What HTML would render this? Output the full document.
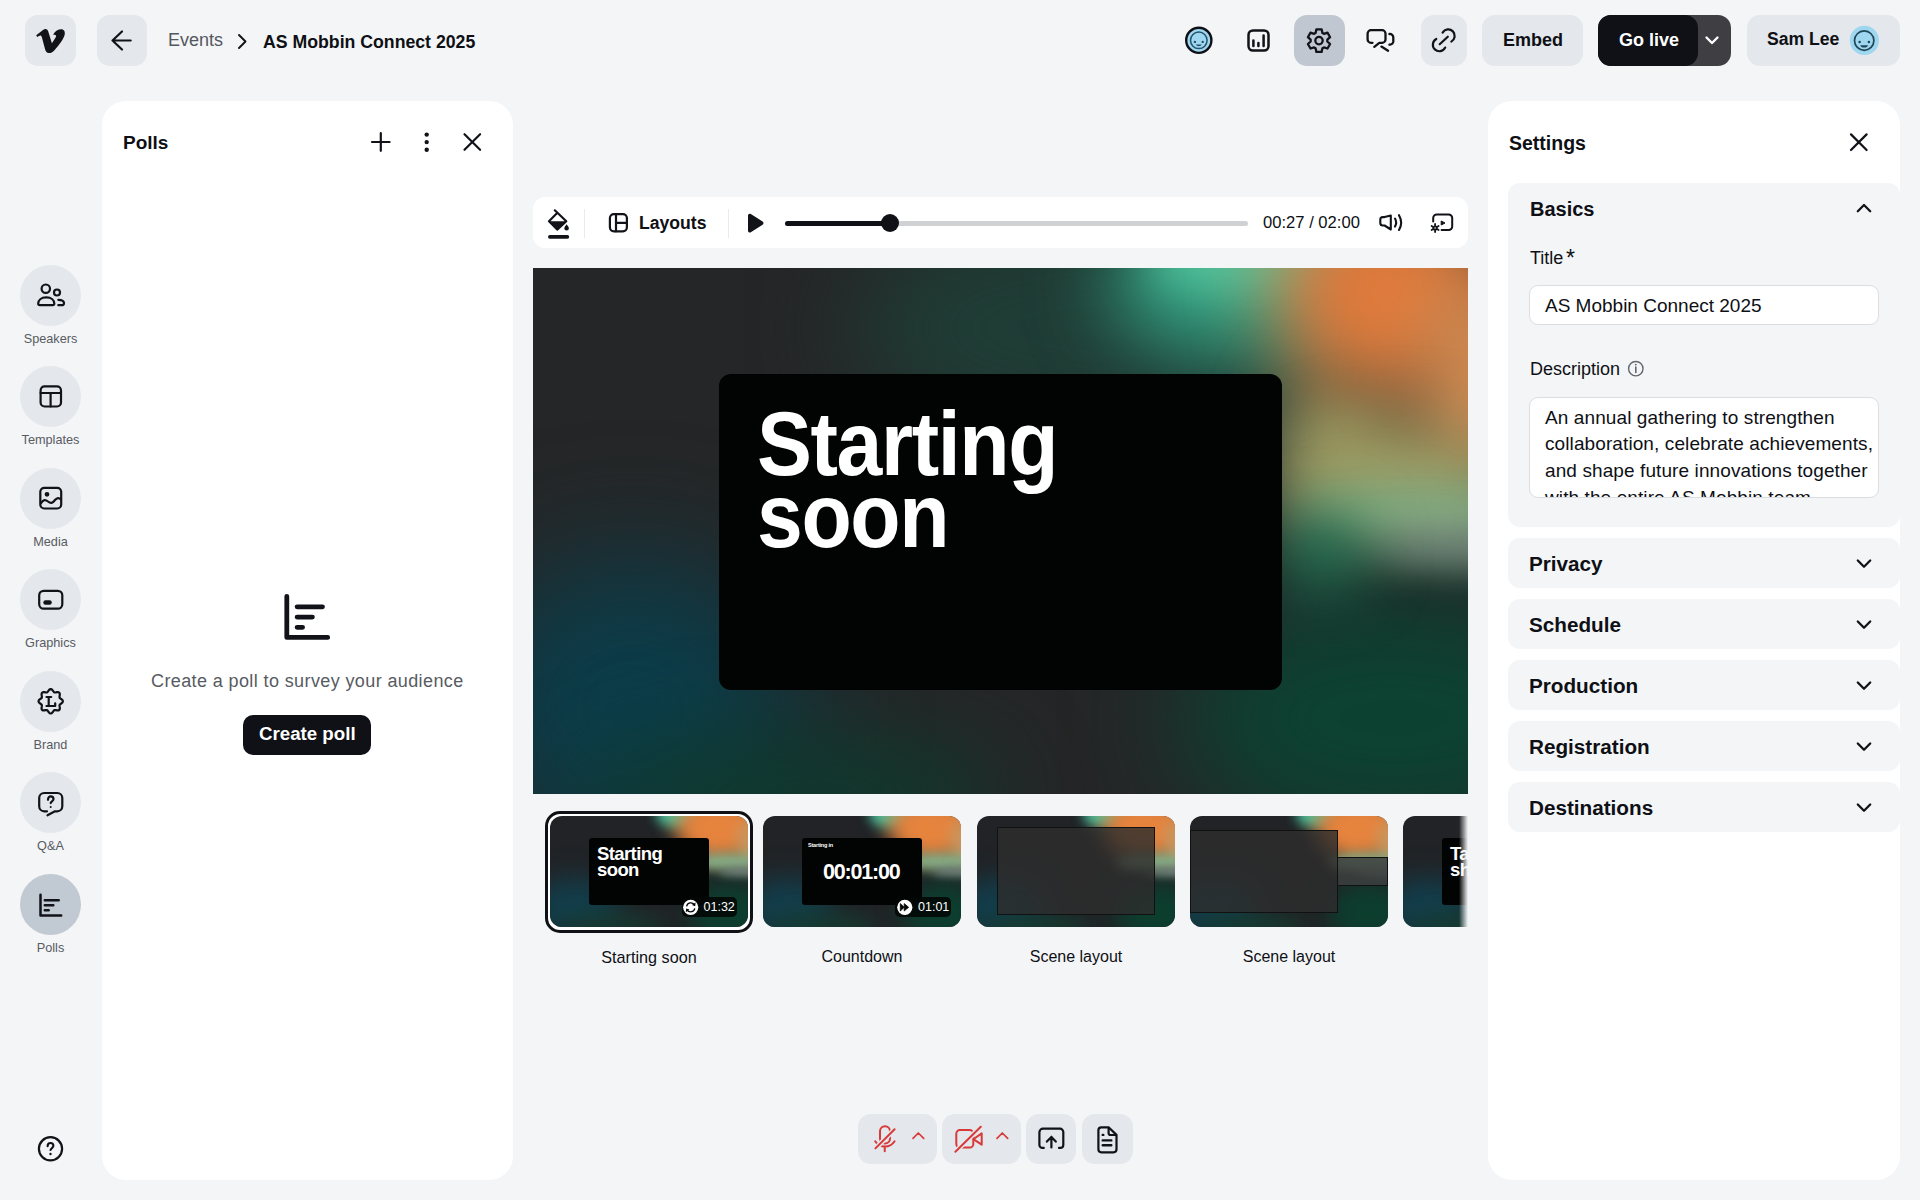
<!DOCTYPE html>
<html><head><meta charset="utf-8">
<style>
*{box-sizing:border-box;margin:0;padding:0}
html,body{width:1920px;height:1200px;overflow:hidden;background:#f4f5f7;font-family:"Liberation Sans",sans-serif;color:#0e1015}
.a{position:absolute}
.t{position:absolute;line-height:1;white-space:nowrap}
.btn{position:absolute;background:#e4e7eb;border-radius:13px}
svg{position:absolute;overflow:visible}
.ic{fill:none;stroke:#111318;stroke-width:2.2;stroke-linecap:round;stroke-linejoin:round}
.circ{position:absolute;left:20px;width:61px;height:61px;border-radius:50%;background:#e4e7eb}
.lbl{position:absolute;left:0;width:101px;text-align:center;font-size:12.7px;color:#575b62;line-height:1}
.panel{position:absolute;background:#fff;border-radius:24px}
.sec{position:absolute;left:20px;width:392px;height:50px;background:#f4f5f7;border-radius:12px}
.sec .t{left:21px;font-size:20.7px;font-weight:700;top:16px}
.chev{position:absolute;left:349px;top:17px}
.blob{position:absolute;border-radius:50%}
.thumb{position:absolute;width:198px;height:111px;border-radius:12px;overflow:hidden;background:#212326}
</style></head><body>

<!-- TOP BAR -->
<div class="btn" style="left:25px;top:15px;width:51px;height:51px"></div>
<div class="btn" style="left:97px;top:15px;width:50px;height:51px"></div>
<div class="t" style="left:168px;top:31px;font-size:18px;color:#53575e">Events</div>
<div class="t" style="left:263px;top:33.8px;font-size:17.7px;font-weight:700;color:#0e1015">AS Mobbin Connect 2025</div>

<div class="btn" style="left:1294px;top:15px;width:51px;height:51px;background:#c0c7d1"></div>
<div class="btn" style="left:1421px;top:15px;width:46px;height:51px"></div>
<div class="btn" style="left:1482px;top:15px;width:101px;height:51px"></div>
<div class="t" style="left:1503px;top:31px;font-size:18px;font-weight:700">Embed</div>
<div class="a" style="left:1598px;top:15px;width:133px;height:51px;border-radius:13px;background:#3f3f43"></div>
<div class="a" style="left:1598px;top:15px;width:100px;height:51px;border-radius:13px;background:#0f1116"></div>
<div class="t" style="left:1619px;top:31px;font-size:18px;font-weight:700;color:#fff">Go live</div>
<div class="btn" style="left:1747px;top:15px;width:153px;height:51px"></div>
<div class="t" style="left:1767px;top:31px;font-size:17.6px;font-weight:700">Sam Lee</div>

<!-- SIDEBAR -->
<div class="circ" style="top:264.5px"></div>
<div class="lbl" style="top:332.5px">Speakers</div>
<div class="circ" style="top:366px"></div>
<div class="lbl" style="top:434px">Templates</div>
<div class="circ" style="top:467.5px"></div>
<div class="lbl" style="top:535.5px">Media</div>
<div class="circ" style="top:569px"></div>
<div class="lbl" style="top:637px">Graphics</div>
<div class="circ" style="top:670.5px"></div>
<div class="lbl" style="top:738.5px">Brand</div>
<div class="circ" style="top:772px"></div>
<div class="lbl" style="top:840px">Q&amp;A</div>
<div class="circ" style="top:873.5px;background:#c1c9d2"></div>
<div class="lbl" style="top:941.5px">Polls</div>

<!-- POLLS PANEL -->
<div class="panel" style="left:102px;top:101px;width:411px;height:1079px"></div>
<div class="t" style="left:123px;top:133px;font-size:19px;font-weight:700">Polls</div>
<div class="t" style="left:151px;top:672px;font-size:18px;letter-spacing:0.39px;color:#575b62">Create a poll to survey your audience</div>
<div class="a" style="left:243px;top:715px;width:128px;height:40px;border-radius:10px;background:#0f1116"></div>
<div class="t" style="left:259px;top:725px;font-size:18.7px;font-weight:700;color:#fff">Create poll</div>

<!-- CENTER TOOLBAR -->
<div class="a" style="left:533px;top:197px;width:935px;height:51px;border-radius:12px;background:#fff"></div>
<div class="a" style="left:584px;top:209px;width:1px;height:29px;background:#e8eaed"></div>
<div class="a" style="left:728px;top:209px;width:1px;height:29px;background:#e8eaed"></div>
<div class="t" style="left:639px;top:215px;font-size:17.6px;font-weight:700">Layouts</div>
<div class="a" style="left:785px;top:220.5px;width:463px;height:5px;border-radius:3px;background:#d0d1d3"></div>
<div class="a" style="left:785px;top:220.5px;width:105px;height:5px;border-radius:3px;background:#0f1116"></div>
<div class="a" style="left:880.5px;top:214px;width:18px;height:18px;border-radius:50%;background:#0f1116"></div>
<div class="t" style="left:1263px;top:214.5px;font-size:16.6px">00:27 / 02:00</div>

<!-- STAGE -->
<div class="a" style="left:533px;top:268px;width:935px;height:526px;overflow:hidden;background:#252627">
  <div class="blob" style="left:320px;top:-60px;width:560px;height:240px;background:#1f3d36;filter:blur(50px)"></div><div class="blob" style="left:575px;top:-60px;width:280px;height:150px;background:#35a283;filter:blur(40px)"></div><div class="blob" style="left:615px;top:-40px;width:200px;height:60px;background:#55c8a0;filter:blur(22px)"></div><div class="blob" style="left:745px;top:105px;width:110px;height:170px;background:#8f9460;filter:blur(35px)"></div><div class="blob" style="left:740px;top:-80px;width:230px;height:210px;background:#e07a3c;filter:blur(40px)"></div><div class="blob" style="left:885px;top:0px;width:120px;height:220px;background:#d38c52;filter:blur(35px)"></div><div class="blob" style="left:760px;top:160px;width:220px;height:90px;background:#a9a466;filter:blur(35px)"></div><div class="blob" style="left:765px;top:216px;width:260px;height:64px;background:#8cba8c;filter:blur(25px)"></div><div class="blob" style="left:835px;top:265px;width:200px;height:34px;background:#8a9690;filter:blur(20px)"></div><div class="blob" style="left:645px;top:325px;width:430px;height:250px;background:#0c4232;filter:blur(55px)"></div><div class="blob" style="left:745px;top:245px;width:90px;height:80px;background:#1c6a50;filter:blur(30px)"></div><div class="blob" style="left:-65px;top:290px;width:330px;height:300px;background:#0b3d4a;filter:blur(60px)"></div><div class="blob" style="left:50px;top:470px;width:420px;height:110px;background:#0e3a2e;filter:blur(45px)"></div>
  <div class="a" style="left:186px;top:106px;width:563px;height:316px;border-radius:12px;background:#020303"></div>
  <div class="t" style="left:224px;top:140px;font-size:90px;font-weight:700;color:#fff;letter-spacing:-1.5px;line-height:72.4px;transform:scaleX(0.915);transform-origin:0 0">Starting<br>soon</div>
</div>

<!-- THUMBNAILS -->
<div class="a" style="left:545px;top:811px;width:208px;height:122px;border-radius:15px;border:3px solid #0f1116;background:#fff"></div>
<div class="a thumb" style="left:550px;top:816px"><div class="blob" style="left:106px;top:-14px;width:44px;height:26px;background:#45c09e;filter:blur(6px)"></div><div class="blob" style="left:125px;top:-21px;width:90px;height:66px;background:#e6843e;filter:blur(10px)"></div><div class="blob" style="left:187px;top:3px;width:26px;height:44px;background:#c9965e;filter:blur(7px)"></div><div class="blob" style="left:138px;top:38px;width:80px;height:16px;background:#8cba90;filter:blur(6px)"></div><div class="blob" style="left:169px;top:52px;width:50px;height:9px;background:#86908c;filter:blur(4px)"></div><div class="blob" style="left:138px;top:66px;width:84px;height:62px;background:#0c3e2e;filter:blur(12px)"></div><div class="blob" style="left:-20px;top:62px;width:90px;height:62px;background:#123e4c;filter:blur(14px)"></div><div class="blob" style="left:5px;top:98px;width:110px;height:24px;background:#163a30;filter:blur(10px)"></div><div class="a" style="left:39px;top:22px;width:120px;height:67px;border-radius:3px;background:#020303"></div>
  <div class="t" style="left:47px;top:30px;font-size:18.5px;font-weight:700;color:#fff;letter-spacing:-0.6px;line-height:16.3px">Starting<br>soon</div>
  <div class="a" style="left:132px;top:81.3px;width:55px;height:19.3px;border-radius:5px;background:rgba(2,8,6,.9)"></div>
  <svg style="left:0;top:0" width="198" height="111"><circle cx="140.7" cy="91.3" r="7.6" fill="#fff"/><path d="M136.6 90.3 A4.3 4.3 0 0 1 144.3 88.6 M144.8 92.3 A4.3 4.3 0 0 1 137.1 94" fill="none" stroke="#050807" stroke-width="1.3"/><path d="M145.6 86.4 L145.2 90.2 L141.9 89 Z M135.8 96.2 L136.2 92.4 L139.5 93.6 Z" fill="#050807"/></svg>
  <div class="t" style="left:153.5px;top:85px;font-size:12.5px;color:#fff">01:32</div>
</div>
<div class="a thumb" style="left:763px;top:816px"><div class="blob" style="left:106px;top:-14px;width:44px;height:26px;background:#45c09e;filter:blur(6px)"></div><div class="blob" style="left:125px;top:-21px;width:90px;height:66px;background:#e6843e;filter:blur(10px)"></div><div class="blob" style="left:187px;top:3px;width:26px;height:44px;background:#c9965e;filter:blur(7px)"></div><div class="blob" style="left:138px;top:38px;width:80px;height:16px;background:#8cba90;filter:blur(6px)"></div><div class="blob" style="left:169px;top:52px;width:50px;height:9px;background:#86908c;filter:blur(4px)"></div><div class="blob" style="left:138px;top:66px;width:84px;height:62px;background:#0c3e2e;filter:blur(12px)"></div><div class="blob" style="left:-20px;top:62px;width:90px;height:62px;background:#123e4c;filter:blur(14px)"></div><div class="blob" style="left:5px;top:98px;width:110px;height:24px;background:#163a30;filter:blur(10px)"></div><div class="a" style="left:39px;top:22px;width:120px;height:67px;border-radius:3px;background:#020303"></div>
  <div class="t" style="left:45px;top:27px;font-size:5.5px;font-weight:700;color:#fff;letter-spacing:-0.2px">Starting in</div>
  <div class="t" style="left:60px;top:46px;font-size:21.5px;font-weight:700;color:#fff;letter-spacing:-1.2px">00:01:00</div>
  <div class="a" style="left:132.3px;top:81.3px;width:55.4px;height:19.3px;border-radius:5px;background:rgba(2,8,6,.9)"></div>
  <svg style="left:0;top:0" width="198" height="111"><circle cx="141.8" cy="91.3" r="7.6" fill="#fff"/><path d="M137.3 87.6 L141.2 91.3 L137.3 95 Z M141.2 87.6 L145.6 91.3 L141.2 95 Z" fill="#050807" stroke="#050807" stroke-width="0.8" stroke-linejoin="round"/></svg>
  <div class="t" style="left:155px;top:85px;font-size:12.5px;color:#fff">01:01</div>
</div>
<div class="a thumb" style="left:977px;top:816px"><div class="blob" style="left:106px;top:-14px;width:44px;height:26px;background:#45c09e;filter:blur(6px)"></div><div class="blob" style="left:125px;top:-21px;width:90px;height:66px;background:#e6843e;filter:blur(10px)"></div><div class="blob" style="left:187px;top:3px;width:26px;height:44px;background:#c9965e;filter:blur(7px)"></div><div class="blob" style="left:138px;top:38px;width:80px;height:16px;background:#8cba90;filter:blur(6px)"></div><div class="blob" style="left:169px;top:52px;width:50px;height:9px;background:#86908c;filter:blur(4px)"></div><div class="blob" style="left:138px;top:66px;width:84px;height:62px;background:#0c3e2e;filter:blur(12px)"></div><div class="blob" style="left:-20px;top:62px;width:90px;height:62px;background:#123e4c;filter:blur(14px)"></div><div class="blob" style="left:5px;top:98px;width:110px;height:24px;background:#163a30;filter:blur(10px)"></div><div class="a" style="left:20px;top:11px;width:158px;height:88px;background:rgba(45,45,45,.82);border:1px solid #111;"></div>
</div>
<div class="a thumb" style="left:1190px;top:816px"><div class="blob" style="left:106px;top:-14px;width:44px;height:26px;background:#45c09e;filter:blur(6px)"></div><div class="blob" style="left:125px;top:-21px;width:90px;height:66px;background:#e6843e;filter:blur(10px)"></div><div class="blob" style="left:187px;top:3px;width:26px;height:44px;background:#c9965e;filter:blur(7px)"></div><div class="blob" style="left:138px;top:38px;width:80px;height:16px;background:#8cba90;filter:blur(6px)"></div><div class="blob" style="left:169px;top:52px;width:50px;height:9px;background:#86908c;filter:blur(4px)"></div><div class="blob" style="left:138px;top:66px;width:84px;height:62px;background:#0c3e2e;filter:blur(12px)"></div><div class="blob" style="left:-20px;top:62px;width:90px;height:62px;background:#123e4c;filter:blur(14px)"></div><div class="blob" style="left:5px;top:98px;width:110px;height:24px;background:#163a30;filter:blur(10px)"></div><div class="a" style="left:0;top:14px;width:148px;height:83px;background:rgba(45,45,45,.82);border:1px solid #111;"></div>
  <div class="a" style="left:147px;top:41px;width:51px;height:29px;background:rgba(60,62,62,.85);border:1px solid #111;"></div>
</div>
<div class="a" style="left:1403px;top:816px;width:65px;height:111px;overflow:hidden">
  <div class="a thumb" style="left:0;top:0"><div class="blob" style="left:106px;top:-14px;width:44px;height:26px;background:#45c09e;filter:blur(6px)"></div><div class="blob" style="left:125px;top:-21px;width:90px;height:66px;background:#e6843e;filter:blur(10px)"></div><div class="blob" style="left:187px;top:3px;width:26px;height:44px;background:#c9965e;filter:blur(7px)"></div><div class="blob" style="left:138px;top:38px;width:80px;height:16px;background:#8cba90;filter:blur(6px)"></div><div class="blob" style="left:169px;top:52px;width:50px;height:9px;background:#86908c;filter:blur(4px)"></div><div class="blob" style="left:138px;top:66px;width:84px;height:62px;background:#0c3e2e;filter:blur(12px)"></div><div class="blob" style="left:-20px;top:62px;width:90px;height:62px;background:#123e4c;filter:blur(14px)"></div><div class="blob" style="left:5px;top:98px;width:110px;height:24px;background:#163a30;filter:blur(10px)"></div>  <div class="a" style="left:39px;top:22px;width:120px;height:67px;border-radius:3px;background:#020303"></div>
    <div class="t" style="left:47px;top:30px;font-size:18.5px;font-weight:700;color:#fff;letter-spacing:-0.6px;line-height:16.3px">Take a<br>short break</div>
  </div>
  <div class="a" style="left:56px;top:0;width:9px;height:111px;background:linear-gradient(90deg,rgba(244,245,247,0),rgba(244,245,247,1))"></div>
</div>
<div class="t" style="left:550px;top:948.5px;width:198px;text-align:center;font-size:16.2px">Starting soon</div>
<div class="t" style="left:763px;top:948.5px;width:198px;text-align:center;font-size:16px">Countdown</div>
<div class="t" style="left:977px;top:948.5px;width:198px;text-align:center;font-size:16px">Scene layout</div>
<div class="t" style="left:1190px;top:948.5px;width:198px;text-align:center;font-size:16px">Scene layout</div>

<!-- BOTTOM CONTROLS -->
<div class="btn" style="left:858px;top:1114px;width:79px;height:50px"></div>
<div class="btn" style="left:942px;top:1114px;width:79px;height:50px"></div>
<div class="btn" style="left:1026px;top:1114px;width:50px;height:50px"></div>
<div class="btn" style="left:1082px;top:1114px;width:51px;height:50px"></div>

<!-- SETTINGS PANEL -->
<div class="panel" style="left:1488px;top:101px;width:412px;height:1079px;overflow:hidden">
  <div class="t" style="left:21px;top:33px;font-size:19.5px;font-weight:700">Settings</div>
  <div class="a" style="left:20px;top:82px;width:392px;height:344px;background:#f4f5f7;border-radius:12px"></div>
  <div class="t" style="left:42px;top:98px;font-size:20px;font-weight:700">Basics</div>
  <div class="t" style="left:42px;top:148px;font-size:18px">Title<span style="position:absolute;left:36px;top:-2.5px;font-size:23px;line-height:1">*</span></div>
  <div class="a" style="left:41px;top:184px;width:350px;height:40px;background:#fff;border:1px solid #dadde2;border-radius:9px"></div>
  <div class="t" style="left:57px;top:195px;font-size:19px">AS Mobbin Connect 2025</div>
  <div class="t" style="left:42px;top:259px;font-size:18px">Description</div>
  <div class="a" style="left:41px;top:296px;width:350px;height:101px;background:#fff;border:1px solid #dadde2;border-radius:9px;overflow:hidden">
    <div style="position:absolute;left:15px;top:6.5px;width:340px;font-size:19px;line-height:26.7px;letter-spacing:0.1px;white-space:nowrap">An annual gathering to strengthen<br>collaboration, celebrate achievements,<br>and shape future innovations together<br>with the entire AS Mobbin team.</div>
  </div>
  <div class="sec" style="top:437px"><div class="t">Privacy</div></div>
  <div class="sec" style="top:498px"><div class="t">Schedule</div></div>
  <div class="sec" style="top:559px"><div class="t">Production</div></div>
  <div class="sec" style="top:620px"><div class="t">Registration</div></div>
  <div class="sec" style="top:681px"><div class="t">Destinations</div></div>
</div>


<svg class="a" style="left:0;top:0" width="1920" height="1200" viewBox="0 0 1920 1200">
<!-- vimeo -->
<path fill="#111318" d="M36.2 35.3 L43 30 C45.6 28.2 47.8 29.3 48.4 32 L51.9 43.2 L55.6 37.6 C56.6 36 56.4 34.5 53.1 34.7 C55 31 58.4 29.2 61.2 29.2 C64 29.2 65.3 31.6 64.7 34.6 C64 38.6 59.5 44.8 54.5 50.2 C52.5 52.5 50.6 53.2 48.8 53.1 C46.9 53 45.7 51.6 45 49 L41.8 37 C41.4 35.3 40.3 35 38.9 35.9 L37.2 36.9 Z"/>
<!-- back arrow -->
<path class="ic" style="stroke-width:2.2" d="M130.7 40.5 H112.5 M122 31.5 L112.5 40.5 L122 49.5"/>
<!-- breadcrumb chevron -->
<path class="ic" style="stroke-width:1.9" d="M239 35 L245.5 41.5 L239 48"/>
<!-- smiley -->
<circle cx="1198.8" cy="40.3" r="12.6" fill="#9fd6f0" stroke="#0e1015" stroke-width="2.4"/>
<circle cx="1198.8" cy="40.3" r="8.3" fill="none" stroke="#24536b" stroke-width="1.5"/>
<circle cx="1194.9" cy="41.9" r="1.2" fill="#24536b"/><circle cx="1202.7" cy="41.9" r="1.2" fill="#24536b"/>
<path d="M1195.6 44.4 H1201.9 Q1201 46.2 1198.8 46.2 Q1196.6 46.2 1195.6 44.4Z" fill="#24536b"/>
<!-- chart -->
<rect class="ic" style="stroke-width:2.5" x="1248.5" y="30.4" width="20" height="20.2" rx="4.5"/>
<path class="ic" style="stroke-width:2.5" d="M1253.4 40.5 V46 M1258.4 43 V46 M1263.6 35.5 V46"/>
<!-- gear -->
<path class="ic" style="stroke-width:2.3" d="M1315.58 32.93 L1316.39 29.30 L1321.61 29.30 L1322.42 32.93 L1323.94 33.80 L1327.48 32.69 L1330.09 37.21 L1327.35 39.72 L1327.35 41.48 L1330.09 43.99 L1327.48 48.51 L1323.94 47.40 L1322.42 48.27 L1321.61 51.90 L1316.39 51.90 L1315.58 48.27 L1314.06 47.40 L1310.52 48.51 L1307.91 43.99 L1310.65 41.48 L1310.65 39.72 L1307.91 37.21 L1310.52 32.69 L1314.06 33.80Z"/>
<circle class="ic" style="stroke-width:2.3" cx="1319" cy="40.6" r="3.7"/>
<!-- chat -->
<path class="ic" style="stroke-width:2.3" d="M1372.5 42.8 H1371 A3.4 3.4 0 0 1 1367.6 39.4 V33.6 A3.4 3.4 0 0 1 1371 30.2 H1382.1 A3.4 3.4 0 0 1 1385.5 33.6 V39.4 A3.4 3.4 0 0 1 1382.1 42.8 H1379.3 L1374.3 46.8"/>
<path class="ic" style="stroke-width:2.3" d="M1389.4 34 A3.4 3.4 0 0 1 1393.3 37.4 V40.4 A3.4 3.4 0 0 1 1389.4 44.6 M1381.4 46.6 L1388.1 50.7"/>
<!-- link -->
<path class="ic" style="stroke-width:2.2" d="M1442.6 32.6 A6.5 6.5 0 1 1 1451.3 41.6 M1445.2 47.6 A6.5 6.5 0 1 1 1436.3 39 M1439.7 44.2 L1447.8 36.7"/>
<!-- go live chevron -->
<path fill="none" stroke="#fff" stroke-width="2.4" stroke-linecap="round" stroke-linejoin="round" d="M1706.5 37.5 L1712 43 L1717.5 37.5"/>
<!-- sam avatar -->
<circle cx="1864.4" cy="40.4" r="14.6" fill="#9fd6f0"/>
<circle cx="1864.2" cy="40.6" r="9.7" fill="none" stroke="#1f4756" stroke-width="1.7"/>
<circle cx="1859.6" cy="42.1" r="1.25" fill="#1f4756"/><circle cx="1868.9" cy="42.1" r="1.25" fill="#1f4756"/>
<path d="M1860.3 45.2 H1868 Q1867.5 47.5 1864.15 47.5 Q1860.8 47.5 1860.3 45.2Z" fill="#1f4756"/>

<!-- sidebar: speakers -->
<g class="ic">
<circle cx="45.8" cy="288.7" r="4.2"/>
<circle cx="57" cy="292.5" r="3"/>
<path d="M46.3 297.3 C51.5 297.3 54.3 300.3 54.3 303.6 C54.3 304.6 53.6 305.2 52.6 305.2 H39.9 C38.9 305.2 38.2 304.6 38.2 303.6 C38.2 300.3 41 297.3 46.3 297.3Z"/>
<path d="M58.3 299.8 C61.8 299.8 64 301.3 64 303.2 C64 304.6 63 305.2 61.6 305.2 H58.3"/>
<!-- templates -->
<rect x="40.6" y="386.4" width="20.4" height="20.1" rx="4"/>
<path d="M40.6 393 H61 M50.6 393 V406.5"/>
<!-- media -->
<rect x="40.3" y="487.8" width="20.9" height="20.7" rx="4"/>
<path d="M41 503 C43.5 499.5 45.5 499.5 48 501.5 C50.5 503.5 52.5 503.5 55 500 C57 497.5 59 497.5 61 499.5"/>
<circle cx="47" cy="494.3" r="1.3" fill="#111318"/>
<!-- graphics -->
<rect x="39.2" y="590.8" width="23.1" height="17.9" rx="4.5"/>
<rect x="43.3" y="600.2" width="8.5" height="4.6" rx="2.3" fill="#111318" stroke="none"/>
<!-- brand -->
<path d="M62.9 701.3 L62.6 702.3 L61.7 703.2 L60.6 704.0 L59.8 704.6 L59.5 705.4 L59.6 706.4 L59.8 707.7 L59.8 708.9 L59.3 709.9 L58.3 710.4 L57.1 710.4 L55.8 710.2 L54.8 710.1 L54.0 710.4 L53.4 711.2 L52.6 712.3 L51.7 713.2 L50.7 713.5 L49.7 713.2 L48.8 712.3 L48.0 711.2 L47.4 710.4 L46.6 710.1 L45.6 710.2 L44.3 710.4 L43.1 710.4 L42.1 709.9 L41.6 708.9 L41.6 707.7 L41.8 706.4 L41.9 705.4 L41.6 704.6 L40.8 704.0 L39.7 703.2 L38.8 702.3 L38.5 701.3 L38.8 700.3 L39.7 699.4 L40.8 698.6 L41.6 698.0 L41.9 697.2 L41.8 696.2 L41.6 694.9 L41.6 693.7 L42.1 692.7 L43.1 692.2 L44.3 692.2 L45.6 692.4 L46.6 692.5 L47.4 692.2 L48.0 691.4 L48.8 690.3 L49.7 689.4 L50.7 689.1 L51.7 689.4 L52.6 690.3 L53.4 691.4 L54.0 692.2 L54.8 692.5 L55.8 692.4 L57.1 692.2 L58.3 692.2 L59.3 692.7 L59.8 693.7 L59.8 694.9 L59.6 696.2 L59.5 697.2 L59.8 698.0 L60.6 698.6 L61.7 699.4 L62.6 700.3Z"/>
<path d="M46.5 697 H51.2 M48.7 697 V706 M46.5 706 H55.2 V703.3"/>
<!-- qa -->
<path d="M47 811.3 H44.2 A5 5 0 0 1 39.2 806.3 V798 A5 5 0 0 1 44.2 793 H57.3 A5 5 0 0 1 62.3 798 V806.3 A5 5 0 0 1 57.3 811.3 H55 L47.5 815.3"/>
<path d="M48 799.8 C48 797.8 49.3 796.3 50.7 796.3 C52.3 796.3 53.5 797.5 53.5 799 C53.5 800.8 51.5 801.3 50.7 803"/>
<circle cx="50.7" cy="807" r="1" fill="#111318" stroke="none"/>
<!-- polls sidebar -->
<path style="stroke-width:2.5" d="M40.5 894.8 V915.5 H61.2 M44.8 900.3 H58.7 M44.8 905.3 H53.3 M44.8 910.3 H48.7"/>
<!-- help -->
<circle cx="50.5" cy="1148.8" r="11.6" style="stroke-width:2.2"/>
</g>
<path class="ic" style="stroke-width:2.1" d="M47.6 1146.2 C47.6 1144.3 48.9 1143 50.5 1143 C52.2 1143 53.4 1144.2 53.4 1145.8 C53.4 1147.6 51.2 1148 50.5 1150"/>
<circle cx="50.5" cy="1154" r="1.2" fill="#111318"/>

<!-- polls header icons -->
<path class="ic" d="M380.8 133.2 V150.8 M372 142 H389.6"/>
<circle cx="426.7" cy="134.6" r="2.2" fill="#111318"/><circle cx="426.7" cy="142.1" r="2.2" fill="#111318"/><circle cx="426.7" cy="149.7" r="2.2" fill="#111318"/>
<path class="ic" d="M464.5 134.2 L480.1 149.8 M480.1 134.2 L464.5 149.8"/>
<!-- polls empty icon -->
<path class="ic" style="stroke-width:4.8" d="M286.8 596.3 V637.4 H327.7 M297.1 606.8 H322.5 M297.1 617.1 H312.4 M297.1 627.3 H302.6"/>

<!-- toolbar -->
<path d="M548.6 221.2 L556.4 213.7 L565.6 221.2 Z" fill="none"/>
<path class="ic" style="stroke-width:2.2" d="M554.8 210.3 L566.3 221.2 L557.2 229.6 L549 221.2 L556.4 213.7"/>
<path d="M549 221.2 H566.3 L557.2 229.6 Z" fill="#111318"/>
<path d="M566.6 224.3 C567.8 226 568.9 227.2 568.9 228.3 A2.3 2.3 0 0 1 564.3 228.3 C564.3 227.2 565.4 226 566.6 224.3Z" fill="#111318"/>
<path class="ic" style="stroke-width:3.6" d="M549.8 236.9 H567.4"/>
<rect class="ic" style="stroke-width:2.2" x="609.9" y="214.1" width="17" height="17.2" rx="4"/>
<path class="ic" style="stroke-width:2.2" d="M616 214.1 V231.3 M616 222.8 H626.9"/>
<path d="M748 215.5 C748 214 749.6 213.2 750.8 214 L762.6 221.6 C763.8 222.4 763.8 224 762.6 224.8 L750.8 232.3 C749.6 233.1 748 232.3 748 230.8 Z" fill="#111318"/>
<path class="ic" style="stroke-width:2.1" d="M1390.8 215.5 V229.5 L1384.6 225.5 H1382.8 A2.5 2.5 0 0 1 1380.3 223 V219.6 A2.5 2.5 0 0 1 1382.8 217.1 H1384.6 Z"/>
<path class="ic" style="stroke-width:2.1" d="M1395 218.6 Q1397.3 222.6 1395 226.6 M1399 215.2 Q1403.3 222.6 1399 230"/>
<path class="ic" style="stroke-width:2" d="M1433.2 221.5 V218 A3.6 3.6 0 0 1 1436.8 214.4 H1448.6 A3.6 3.6 0 0 1 1452.2 218 V226.4 A3.6 3.6 0 0 1 1448.6 230 H1441.6"/>
<path d="M1441.2 221 L1445 223 L1441.2 225 Z" fill="#111318" stroke="#111318" stroke-width="1" stroke-linejoin="round"/>
<circle cx="1435.1" cy="228" r="1.7" fill="none" stroke="#111318" stroke-width="1.8"/>
<path class="ic" style="stroke-width:1.8" d="M1435.1 224 V225.4 M1435.1 230.6 V232 M1431.6 226 L1432.8 226.7 M1437.4 229.3 L1438.6 230 M1431.6 230 L1432.8 229.3 M1437.4 226.7 L1438.6 226"/>

<!-- bottom controls -->
<g fill="none" stroke="#d83a3a" stroke-width="2" stroke-linecap="round" stroke-linejoin="round">
<path d="M880 1131.3 A5 5 0 0 1 890 1131.3 V1138.4 A5 5 0 0 1 880 1138.4 Z"/>
<path d="M875.2 1141.3 A11.5 11.5 0 0 0 894.6 1141.3 M884.75 1146.8 V1151.3"/>
<path d="M875.4 1148.4 L894.6 1129.2" stroke="#e4e7eb" stroke-width="5"/>
<path d="M875.4 1148.4 L894.6 1129.2"/>
<path d="M913 1138.4 L918.3 1133 L923.7 1138.4" stroke-width="1.7"/>
<rect x="956.3" y="1130.1" width="17" height="17.5" rx="3.6"/>
<path d="M973.3 1139.2 L981.7 1133.4 V1144.7 Z"/>
<path d="M955.4 1151.8 L980.8 1126.8" stroke="#e4e7eb" stroke-width="5"/>
<path d="M955.4 1151.8 L980.8 1126.8"/>
<path d="M997 1138.4 L1002.3 1133 L1007.7 1138.4" stroke-width="1.7"/>
</g>
<path class="ic" style="stroke-width:2.2" d="M1043.8 1147.9 H1042.4 A3 3 0 0 1 1039.4 1144.9 V1132.2 A3.6 3.6 0 0 1 1043 1128.7 H1060 A3.3 3.3 0 0 1 1063.3 1132 V1145 A3 3 0 0 1 1060.3 1147.9 H1059 M1051.4 1147.4 V1136.8 M1046.9 1141.6 L1051.4 1137 L1055.8 1141.6"/>
<path class="ic" style="stroke-width:2.2" d="M1108.6 1127.3 H1101.4 A3 3 0 0 0 1098.4 1130.3 V1149.3 A3 3 0 0 0 1101.4 1152.3 H1113.5 A3 3 0 0 0 1116.5 1149.3 V1134.9 Z M1108.6 1127.3 V1133 A2 2 0 0 0 1110.6 1135 H1116.5"/>
<path class="ic" style="stroke-width:2.4" d="M1102.7 1134.9 H1103.3 M1102.7 1140.4 H1111.3 M1102.7 1145.3 H1111.3"/>

<!-- settings -->
<path class="ic" d="M1851 134.4 L1866.6 150 M1866.6 134.4 L1851 150"/>
<path class="ic" style="stroke-width:2.3" d="M1857.8 211.2 L1864 205 L1870.2 211.2"/>
<circle cx="1635.8" cy="368.7" r="7.2" fill="none" stroke="#62676f" stroke-width="1.4"/>
<path d="M1635.8 367 V372.5" stroke="#62676f" stroke-width="1.6" stroke-linecap="round"/>
<circle cx="1635.8" cy="364.6" r="0.95" fill="#62676f"/>
<path class="ic" style="stroke-width:2.3" d="M1857.8 560.5 L1864 566.7 L1870.2 560.5"/>
<path class="ic" style="stroke-width:2.3" d="M1857.8 621.5 L1864 627.7 L1870.2 621.5"/>
<path class="ic" style="stroke-width:2.3" d="M1857.8 682.5 L1864 688.7 L1870.2 682.5"/>
<path class="ic" style="stroke-width:2.3" d="M1857.8 743.5 L1864 749.7 L1870.2 743.5"/>
<path class="ic" style="stroke-width:2.3" d="M1857.8 804.5 L1864 810.7 L1870.2 804.5"/>
</svg>
</body></html>
